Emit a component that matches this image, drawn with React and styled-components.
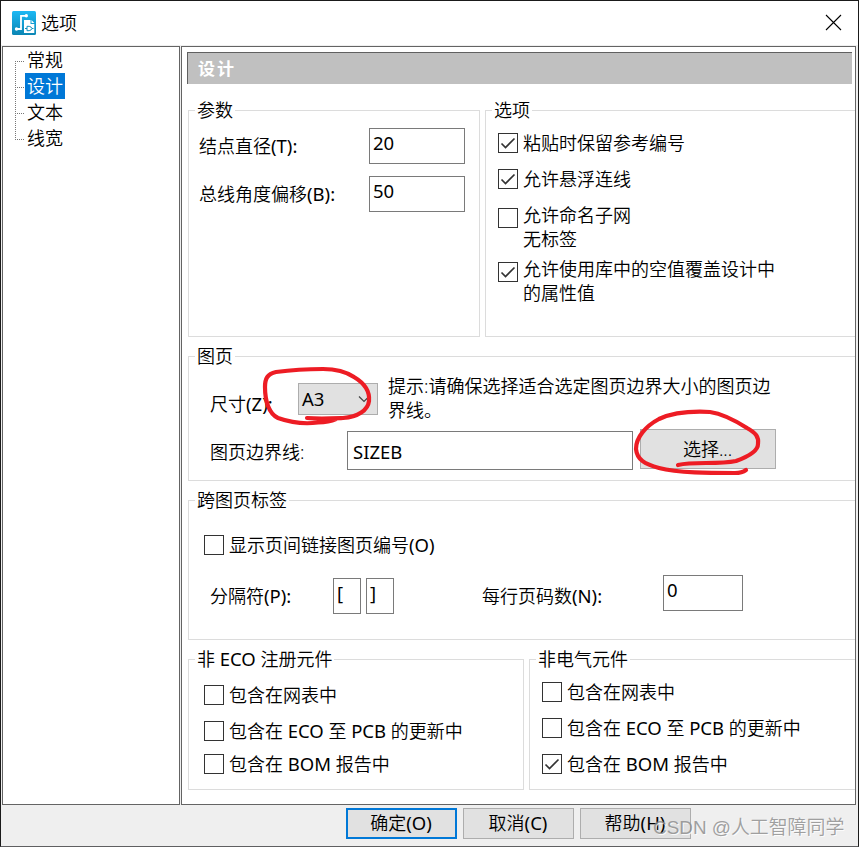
import React from "react";
import styled, { createGlobalStyle, css } from "styled-components";

const GlobalStyle = createGlobalStyle`
  *, *::before, *::after { box-sizing: border-box; }
  body {
    margin: 0;
    background: #fff;
    overflow: hidden;
  }
`;

const Dialog = styled.div`
  position: relative;
  display: flex;
  flex-direction: column;
  width: 859px;
  height: 847px;
  background: #efefef;
  border: 1px solid #1a1a1a;
  border-bottom-color: #5f5f61;
  color: #000;
  font: 350 18px/24px "Noto Sans", "Noto Sans CJK SC", sans-serif;
  white-space: nowrap;
`;

const Latin = styled.span`
  font-size: 18.5px;
  font-weight: 400;
  line-height: 1;
`;

const TitleBar = styled.header`
  display: flex;
  align-items: center;
  height: 44px;
  padding: 0 15px 0 11px;
  background: #fff;
`;

const Title = styled.h1`
  flex: 1;
  margin: -1px 0 0 5px;
  font: inherit;
`;

const CloseButton = styled.button`
  display: flex;
  padding: 0;
  border: 0;
  background: none;
`;

const Body = styled.main`
  display: grid;
  grid-template-columns: 178px 675px;
  column-gap: 1px;
  height: 759px;
  margin: 1px 0 0 1px;
`;

const Pane = styled.section`
  min-width: 0;
  border: 1px solid #646464;
  background: #fff;
`;

const Tree = styled.ul`
  margin: 0;
  padding: 0;
  list-style: none;
`;

const dots = "repeating-linear-gradient(#777 0 1px, transparent 1px 2px)";

const TreeItem = styled.li`
  display: flex;
  height: 26px;
  padding-left: 12px;
  background: ${dots} 12px ${(p) => (p.$first ? 14 : 0)}px / 1px ${(p) => (p.$last ? 14 : 26)}px no-repeat;

  &::before {
    content: "";
    width: 10px;
    height: 1px;
    margin-top: 14px;
    background: repeating-linear-gradient(90deg, #777 0 1px, transparent 1px 2px);
  }
`;

const TreeLabel = styled.span`
  height: 26px;
  padding: 0 2px;
  line-height: 26px;
  ${(p) => p.$selected && css`
    background: #0078d7;
    color: #fff;
  `}
`;

const Banner = styled.h2`
  width: 665px;
  height: 32px;
  margin: 5px 0 0 5px;
  padding-left: 10px;
  border: solid #606060;
  border-width: 1px 0 0 1px;
  background: #c0c0c0;
  color: #fff;
  font: 600 17px/29px "Noto Sans CJK SC", sans-serif;
  letter-spacing: 2px;
`;

const Groups = styled.div`
  display: grid;
  grid-template-rows: 227px 125px 140px 131px;
  row-gap: 19px;
  margin: 26px 0 0 6px;
`;

const GroupPair = styled.div`
  display: grid;
  grid-template-columns: ${(p) => p.$left}px 1fr;
  column-gap: 5px;
`;

const GroupBox = styled.section`
  min-width: 0;
  border: 1px solid #dcdcdc;
  border-right-width: ${(p) => (p.$open ? 0 : 1)}px;
`;

const Legend = styled.h3`
  width: max-content;
  height: 24px;
  margin: -12px 0 0 6px;
  padding: 0 2px;
  background: #fff;
  font: inherit;
  line-height: 23px;
`;

const Row = styled.div`
  display: flex;
  align-items: flex-start;
  margin-top: ${(p) => p.$gap}px;
  padding-left: ${(p) => p.$indent}px;
`;

const Label = styled.label`
  width: ${(p) => p.$width}px;
  margin-top: ${(p) => p.$drop || 0}px;
`;

const Field = styled.div`
  width: ${(p) => p.$width}px;
  height: ${(p) => p.$height || 36}px;
  margin: ${(p) => p.$drop || 0}px ${(p) => p.$after || 0}px 0 0;
  padding-left: ${(p) => p.$inset || 3}px;
  border: 1px solid #7a7a7a;
  background: #fff;
  line-height: ${(p) => p.$line || 28}px;
`;

const Select = styled.div`
  display: flex;
  align-items: center;
  justify-content: space-between;
  width: 80px;
  height: 32px;
  margin: 0 10px 0 0;
  padding: 0 7px 0 3px;
  border: 1px solid #adadad;
  background: #e1e1e1;
`;

const Hint = styled.p`
  margin: -9px 0 0;
`;

const Button = styled.button`
  width: ${(p) => p.$width || 111}px;
  height: ${(p) => p.$height || 31}px;
  padding: 0 1px 1px 0;
  border: ${(p) => (p.$primary ? "2px solid #0078d7" : "1px solid #adadad")};
  background: #e1e1e1;
  color: #000;
  font: inherit;
`;

const CheckRow = styled.div`
  display: flex;
  align-items: flex-start;
  margin-top: ${(p) => p.$gap}px;
  padding-left: ${(p) => p.$indent}px;
`;

const Box = styled.span`
  display: grid;
  place-items: center;
  flex: none;
  width: 20px;
  height: 20px;
  margin: ${(p) => p.$drop}px 5px 0 0;
  border: 1px solid #333;
  background: #fff;
`;

const CheckText = styled.span`
  margin: -1px 0 1px;
`;

const Footer = styled.footer`
  display: flex;
  gap: 6px;
  padding: 3px 0 0 345px;
`;

const Ink = styled.svg`
  position: absolute;
  left: -1px;
  top: -1px;
  pointer-events: none;
`;

const Watermark = styled.span`
  position: absolute;
  left: 652px;
  top: 814px;
  color: #8c8c8c;
  opacity: 0.8;
  font-family: "Liberation Sans", "Noto Sans CJK SC", sans-serif;
  font-size: 18.9px;
  line-height: 26px;
  text-shadow: 1px 1px 0 #fff;
`;

// Latin runs are set slightly larger and heavier than the Chinese text around them.
function Mixed({ children }) {
  return (
    <span>
      {children.split(/([!-~]+)/).map((run, i) => (i % 2 ? <Latin key={i}>{run}</Latin> : run))}
    </span>
  );
}

function Check({ text, checked, gap, indent, drop = 1 }) {
  return (
    <CheckRow $gap={gap} $indent={indent}>
      <Box $drop={drop}>
        {checked && (
          <svg width="18" height="18" viewBox="0 0 18 18" fill="none" stroke="#333" strokeWidth="1.7">
            <path d="M2.5 9.500 6.5 13.500 15.500 4.500" />
          </svg>
        )}
      </Box>
      <CheckText>
        {text.map((line) => (
          <div key={line}><Mixed>{line}</Mixed></div>
        ))}
      </CheckText>
    </CheckRow>
  );
}

function Group({ title, open, children }) {
  return (
    <GroupBox $open={open}>
      <Legend><Mixed>{title}</Mixed></Legend>
      {children}
    </GroupBox>
  );
}

function Logo() {
  return (
    <svg width="24" height="24" viewBox="0 0 24 24" fill="none">
      <defs>
        <linearGradient id="logo" x1="0" y1="0" x2="0" y2="1">
          <stop offset="0" stopColor="#1bb8f4" />
          <stop offset="1" stopColor="#0b86b4" />
        </linearGradient>
      </defs>
      <rect width="24" height="24" rx="1.5" fill="url(#logo)" />
      <path d="M4.500 18H9V4.800H14" stroke="#fff" strokeWidth="1.800" />
      <circle cx="4.500" cy="18" r="1.700" fill="#fff" />
      <circle cx="14.300" cy="4.800" r="1.700" fill="#fff" />
      <path d="M12 9h6.500v4H22.300v9H12z" fill="#fff" />
      <path d="M19.500 9 22.300 12H19.500z" fill="#fff" />
      <path d="M13 17.500h2m5 0h1.500M15 15.300h2.200q2.300.5 2.800 2.200-.5 1.700-2.800 2.200H15z" stroke="#0f8fbe" strokeWidth="1" />
    </svg>
  );
}

const pages = ["常规", "设计", "文本", "线宽"];

export default function App() {
  return (
    <>
      <GlobalStyle />
      <Dialog>
        <TitleBar>
          <Logo />
          <Title>选项</Title>
          <CloseButton aria-label="关闭">
            <svg width="18" height="18" viewBox="0 0 18 18" stroke="#000" strokeWidth="1.1">
              <path d="M1 1 16 16M16 1 1 16" />
            </svg>
          </CloseButton>
        </TitleBar>
        <Body>
          <Pane>
            <Tree>
              {pages.map((page, i) => (
                <TreeItem key={page} $first={i === 0} $last={i === pages.length - 1}>
                  <TreeLabel $selected={i === 1}>{page}</TreeLabel>
                </TreeItem>
              ))}
            </Tree>
          </Pane>
          <Pane>
            <Banner>设计</Banner>
            <Groups>
              <GroupPair $left={292}>
                <Group title="参数">
                  <Row $gap={5} $indent={10}>
                    <Label $width={170} $drop={6}><Mixed>结点直径(T):</Mixed></Label>
                    <Field $width={96}><Mixed>20</Mixed></Field>
                  </Row>
                  <Row $gap={12} $indent={10}>
                    <Label $width={170} $drop={6}><Mixed>总线角度偏移(B):</Mixed></Label>
                    <Field $width={96}><Mixed>50</Mixed></Field>
                  </Row>
                </Group>
                <Group title="选项" open>
                  <Check gap={9} indent={12} checked text={["粘贴时保留参考编号"]} />
                  <Check gap={12} indent={12} checked text={["允许悬浮连线"]} />
                  <Check gap={12} indent={12} drop={4} text={["允许命名子网", "无标签"]} />
                  <Check gap={6} indent={12} drop={4} checked text={["允许使用库中的空值覆盖设计中", "的属性值"]} />
                </Group>
              </GroupPair>
              <Group title="图页" open>
                <Row $gap={14} $indent={21}>
                  <Label $width={88} $drop={9}><Mixed>尺寸(Z):</Mixed></Label>
                  <Select>
                    <Mixed>A3</Mixed>
                    <svg width="12" height="8" viewBox="0 0 12 8" fill="none" stroke="#444" strokeWidth="1.2">
                      <path d="M1 1.500 6 6.500 11 1.500" />
                    </svg>
                  </Select>
                  <Hint>
                    提示:请确保选择适合选定图页边界大小的图页边
                    <br />
                    界线。
                  </Hint>
                </Row>
                <Row $gap={7} $indent={21}>
                  <Label $width={137} $drop={11}>图页边界线:</Label>
                  <Field $width={286} $height={39} $drop={2} $inset={5} $line={40} $after={7}><Mixed>SIZEB</Mixed></Field>
                  <Button $width={136} $height={40}>选择...</Button>
                </Row>
              </Group>
              <Group title="跨图页标签" open>
                <Check gap={21} indent={15} text={["显示页间链接图页编号(O)"]} />
                <Row $gap={17} $indent={21}>
                  <Label $width={123} $drop={9}><Mixed>分隔符(P):</Mixed></Label>
                  <Field $width={28} $drop={3} $after={5}><Mixed>[</Mixed></Field>
                  <Field $width={28} $drop={3} $after={88}><Mixed>]</Mixed></Field>
                  <Label $width={181} $drop={9}><Mixed>每行页码数(N):</Mixed></Label>
                  <Field $width={80}><Mixed>0</Mixed></Field>
                </Row>
              </Group>
              <GroupPair $left={336}>
                <Group title="非 ECO 注册元件">
                  <Check gap={12} indent={15} text={["包含在网表中"]} />
                  <Check gap={12} indent={15} text={["包含在 ECO 至 PCB 的更新中"]} />
                  <Check gap={9} indent={15} text={["包含在 BOM 报告中"]} />
                </Group>
                <Group title="非电气元件" open>
                  <Check gap={9} indent={12} text={["包含在网表中"]} />
                  <Check gap={12} indent={12} text={["包含在 ECO 至 PCB 的更新中"]} />
                  <Check gap={12} indent={12} checked text={["包含在 BOM 报告中"]} />
                </Group>
              </GroupPair>
            </Groups>
          </Pane>
        </Body>
        <Footer>
          <Button $primary><Mixed>确定(O)</Mixed></Button>
          <Button><Mixed>取消(C)</Mixed></Button>
          <Button><Mixed>帮助(H)</Mixed></Button>
        </Footer>
        <Ink width="859" height="847" viewBox="0 0 859 847" fill="none" stroke="#ed1c24" strokeWidth="4.200" strokeLinecap="round" strokeLinejoin="round">
          <path d="M307 418C319 419 330 418.500 343 418C358 417 368 410 369 401C370 391 364 383 354 377C345 371 335 369 323 369C306 369 291 370 276 372C267 374 265 379 265 387C265 401 269 414 278 418C292 423 307 424 318 422.500Q329 422 336 419" />
          <path d="M678 465C694 461 717 465 736 461C747 457 758 451 758 444C759 437 756 433 747 428C736 421 724 414 710 412C691 411 672 413 659 419C646 426 636 437 636 449C637 460 645 464 659 468C678 473 710 473 735 473Q742 473 746 470" />
        </Ink>
        <Watermark>CSDN @人工智障同学</Watermark>
      </Dialog>
    </>
  );
}
